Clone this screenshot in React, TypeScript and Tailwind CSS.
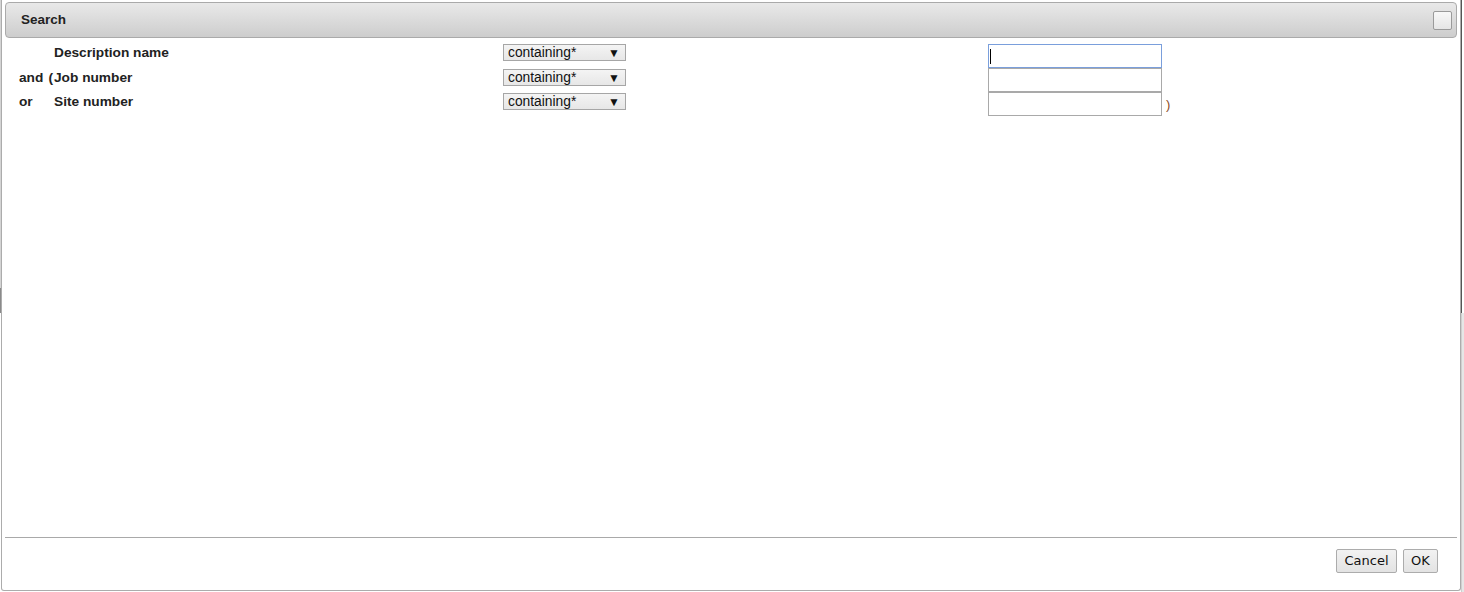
import React from 'react';

const rows = [
  { prefix: '', paren: '', label: 'Description name', focused: true, close: false },
  { prefix: 'and', paren: '(', label: 'Job number', focused: false, close: false },
  { prefix: 'or', paren: '', label: 'Site number', focused: false, close: true },
];

const ContainingSelect: React.FC = () => (
  <div className="flex h-[17px] w-[123px] items-center justify-between border border-[#a6a6a6] bg-gradient-to-b from-[#f4f4f4] to-[#e7e7e7] pl-[4px] pr-[5px] text-[13.8px] leading-none text-[#111]">
    <span>containing*</span>
    <span className="text-[12px]">▼</span>
  </div>
);

export default function App() {
  return (
    <div className="relative flex h-[592px] w-[1464px] bg-white font-['Liberation_Sans',Arial,sans-serif]">
      {/* page behind the dialog */}
      <div className="flex w-[1px] flex-col">
        <div className="h-[288px] bg-[#d4d4d4]" />
        <div className="h-[25px] bg-[#8a8a8a]" />
        <div className="flex-1 bg-white" />
      </div>

      <div className="flex h-[591px] w-[1460px] flex-col rounded-b-[3px] border border-t-0 border-[#acacac] px-[3px] pt-[2px]">
        {/* Title bar */}
        <div className="flex h-[36px] items-center justify-between rounded-[4px] border border-[#aaaaaa] bg-gradient-to-b from-[#e9e9e9] to-[#cdcdcd] pl-[15px] pr-[4px]">
          <span className="text-[13.5px] font-bold text-[#222]">Search</span>
          <div className="h-[19px] w-[19px] rounded-[2px] border border-[#9a9a9a] bg-gradient-to-b from-[#f8f8f8] to-[#e6e6e6]" />
        </div>

        {/* Criteria */}
        <div className="flex-1 pl-[14px] pt-[6px]">
          {rows.map((r, i) => (
            <div key={i} className="grid h-[24px] grid-cols-[35px_449px_485px_174px_auto] items-start">
              <div
                className={`flex h-[17px] items-center justify-between pr-[1px] text-[13.7px] font-bold text-[#222] ${
                  i > 0 ? 'mt-[2px]' : 'mt-[1px]'
                }`}
              >
                <span>{r.prefix}</span>
                <span>{r.paren}</span>
              </div>
              <div className={`flex h-[17px] items-center text-[13.7px] font-bold text-[#222] ${i > 0 ? 'mt-[2px]' : 'mt-[1px]'}`}>
                {r.label}
              </div>
              <div className={i > 0 ? 'mt-[1px]' : ''}>
                <ContainingSelect />
              </div>
              <div
                className={
                  r.focused
                    ? 'flex h-[24px] items-center border border-[#7a9fdc] bg-white pl-[1px]'
                    : 'h-[24px] border border-[#a9a9a9] bg-white'
                }
              >
                {r.focused && <div className="h-[15px] w-[1px] bg-black" />}
              </div>
              {r.close ? (
                <span className="pl-[4px] pt-[4px] text-[13px] leading-[17px] text-[#8a4a1a]">)</span>
              ) : (
                <span />
              )}
            </div>
          ))}
        </div>

        {/* Footer */}
        <div className="flex h-[53px] justify-end border-t border-[#a9a9a9] pr-[19px] pt-[11px]">
          <div className="flex gap-[6px] font-['DejaVu_Sans',Verdana,sans-serif] text-[13px] text-[#111]">
            <button className="h-[24px] w-[61px] rounded-[2px] border border-[#acacac] bg-gradient-to-b from-[#f2f2f2] to-[#e3e3e3]">
              Cancel
            </button>
            <button className="h-[24px] w-[35px] rounded-[2px] border border-[#acacac] bg-gradient-to-b from-[#f2f2f2] to-[#e3e3e3]">
              OK
            </button>
          </div>
        </div>
      </div>

      {/* page behind, right side */}
      <div className="flex w-[3px] flex-col">
        <div className="h-[313px] border-l border-[#555] bg-white" />
        <div className="flex-1 border-l border-[#cfcfcf] bg-[#e6e6e6]" />
      </div>
    </div>
  );
}
